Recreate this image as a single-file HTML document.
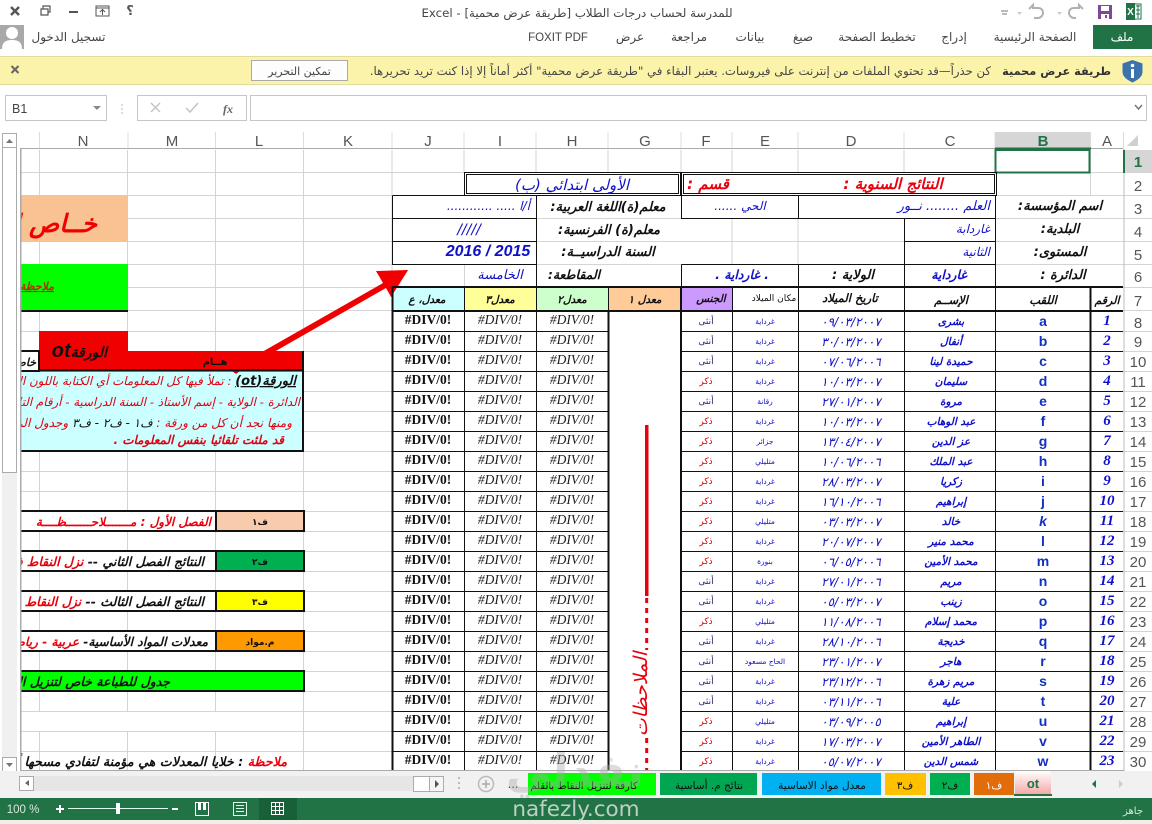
<!DOCTYPE html>
<html lang="ar"><head><meta charset="utf-8"><title>Excel</title>
<style>
html,body{margin:0;padding:0;background:#fff;width:1152px;height:824px;overflow:hidden}
svg{display:block}
text{font-family:"DejaVu Sans",sans-serif;text-anchor:middle;direction:rtl}
.la{font-family:"Liberation Sans",sans-serif;direction:ltr}
.r{direction:rtl;text-anchor:start}
.ui{font-size:12px;fill:#444}
.hd{font-family:"Liberation Sans",sans-serif;font-size:15px;fill:#555;direction:ltr}
.bi{font-weight:bold;font-style:italic}
.t{font-size:12.5px;font-weight:bold;font-style:italic;fill:#111}
.b{font-size:12px;font-style:italic;fill:#1010c8}
.bb{font-size:12.5px;font-style:italic;font-weight:bold;fill:#1010c8}
.rd{fill:#e8000c}
.h{font-size:10.5px;font-weight:bold;font-style:italic;fill:#111}
.n{font-family:"Liberation Serif",serif;font-weight:bold;font-style:italic;font-size:15px;fill:#1010c8}
.l{font-family:"Liberation Sans",sans-serif;font-weight:bold;font-size:14px;fill:#1030c0;direction:ltr}
.m{font-size:10.500px;font-weight:bold;font-style:italic;fill:#1010c8}
.d{font-size:12px;font-style:italic;fill:#1010c8}
.p{font-size:7.5px;fill:#1010c8}
.f{font-size:9px;fill:#222266}
.mm{font-size:9px;fill:#e00000}
.e{font-family:"Liberation Serif",serif;font-weight:bold;font-size:13.5px;fill:#111;direction:ltr}
.ei{font-family:"Liberation Serif",serif;font-style:italic;font-size:13.5px;fill:#222;direction:ltr}
.tab{font-size:10.5px;fill:#111}
</style></head><body>
<svg xmlns="http://www.w3.org/2000/svg" width="1152" height="824" viewBox="0 0 1152 824">
<rect width="1152" height="824" fill="#fff"/>

<!-- title bar -->
<g fill="none" stroke="#555">
<path d="M11 7l8 8M19 7l-8 8" stroke-width="2.4"/>
<path d="M41 9h7v6h-7zM43 9V6h7v6h-2" stroke-width="1.2"/>
<path d="M69 12h9" stroke-width="2"/>
<path d="M96 6h13v10H96zM96 8h13M102.500 15v-5M100 12l2.500-2.500 2.500 2.500" stroke-width="1"/>
</g>
<text x="130" y="15" font-size="13" font-weight="bold" fill="#555">؟</text>
<text x="577" y="17" class="ui" style="font-size:11.800px">للمدرسة لحساب درجات الطلاب  [طريقة عرض محمية] - Excel</text>
<path d="M1001 11h7M1002 14h5" stroke="#777" stroke-width="1" fill="none"/>
<path d="M1017 12h5l-2.500 3zM1057 12h5l-2.500 3z" fill="#ccc"/>
<path d="M1029 9l4-4v3h5c4 0 5 3 5 5s-2 5-5 5h-4" fill="none" stroke="#b0b0b0" stroke-width="2"/>
<path d="M1083 9l-4-4v3h-5c-4 0-5 3-5 5s2 5 5 5h2" fill="none" stroke="#b0b0b0" stroke-width="2"/>
<path d="M1098 5h14v14h-14z" fill="#804998"/><rect x="1101" y="6" width="8" height="5" fill="#fff"/><rect x="1101" y="14" width="8" height="5" fill="#fff"/><rect x="1105" y="15" width="2" height="3" fill="#804998"/>
<rect x="1130" y="4" width="11" height="15" fill="#fff" stroke="#217346"/><path d="M1136 6h4M1136 10h4M1136 14h4M1138 5v13" stroke="#217346"/><rect x="1126" y="3" width="9" height="17" fill="#217346"/>
<text x="1130.500" y="15" class="la" font-size="10" font-weight="bold" fill="#fff">X</text>

<!-- ribbon tabs -->
<rect x="0" y="25" width="24" height="24" fill="#a9a9a9"/>
<circle cx="12" cy="33" r="6" fill="#fff"/><path d="M2 49c0-7 4-9 10-9s10 2 10 9z" fill="#fff"/>
<text x="68.500" y="41" class="ui">تسجيل الدخول</text>
<rect x="1093" y="25" width="59" height="24" fill="#217346"/>
<text x="1122" y="41" class="ui" style="fill:#fff">ملف</text>
<text x="1035" y="41" class="ui">الصفحة الرئيسية</text>
<text x="954" y="41" class="ui">إدراج</text>
<text x="877" y="41" class="ui">تخطيط الصفحة</text>
<text x="803" y="41" class="ui">صيغ</text>
<text x="750" y="41" class="ui">بيانات</text>
<text x="689" y="41" class="ui">مراجعة</text>
<text x="630" y="41" class="ui">عرض</text>
<text x="558" y="41" class="la" font-size="11.500" fill="#444">FOXIT PDF</text>

<!-- protected view bar -->
<rect x="0" y="56" width="1152" height="29" fill="#fbf3a9"/>
<path d="M0 56.500H1152M0 84.500H1152" stroke="#e2dc9c" fill="none"/>
<path d="M11.500 66l7 7M18.500 66l-7 7" stroke="#666" stroke-width="2" fill="none"/>
<rect x="251.500" y="60.500" width="96" height="20" fill="#fdfdfd" stroke="#aaa"/>
<text x="299.500" y="75" class="ui" style="font-size:11px">تمكين التحرير</text>
<path d="M1132.500 60l10 3.500v8c0 6-6 9-10 11-4-2-10-5-10-11v-8z" fill="#3d73ad"/>
<rect x="1131" y="69" width="3" height="9" fill="#fff"/><circle cx="1132.500" cy="65.500" r="1.800" fill="#fff"/>
<text x="1111" y="75" class="r" font-size="11.300" font-weight="bold" fill="#333">طريقة عرض محمية</text>
<text x="991" y="75" class="r" font-size="11.700" fill="#444">كن حذراً—قد تحتوي الملفات من إنترنت على فيروسات. يعتبر البقاء في "طريقة عرض محمية" أكثر أماناً إلا إذا كنت تريد تحريرها.</text>

<!-- formula bar -->
<rect x="5.500" y="95.500" width="101" height="25" fill="#fff" stroke="#c6c6c6"/>
<text x="12" y="113" class="la" font-size="12.500" fill="#444" style="text-anchor:start">B1</text>
<path d="M93 106h8l-4 4z" fill="#888"/>
<path d="M122 104v2M122 108v2M122 112v2" stroke="#bbb"/>
<rect x="137.500" y="95.500" width="109" height="25" fill="#fff" stroke="#c6c6c6"/>
<path d="M151 103l9 9M160 103l-9 9" stroke="#c4c4c4" stroke-width="1.500" fill="none"/>
<path d="M186 108l4 4 8-9" stroke="#c4c4c4" stroke-width="1.500" fill="none"/>
<text x="228" y="113" font-style="italic" font-weight="bold" font-size="12" fill="#666" style="font-family:'Liberation Serif',serif;direction:ltr">fx</text>
<rect x="250.500" y="95.500" width="896" height="25" fill="#fff" stroke="#c6c6c6"/>
<path d="M1135 105l3.500 4 3.500-4" stroke="#777" stroke-width="1.500" fill="none"/>

<!-- column headers -->
<rect x="995" y="132" width="95" height="17" fill="#d6d6d6"/>
<path d="M39.500 132V149M128 132V149M215.500 132V149M303.500 132V149M392 132V149M464 132V149M536 132V149M608 132V149M681 132V149M732 132V149M798 132V149M904 132V149M995 132V149M1090.500 132V149M1123.500 132V149" stroke="#dcdcdc" fill="none"/>
<path d="M20 148.500H1123" stroke="#aaa" fill="none"/>
<rect x="995" y="147.500" width="96" height="2" fill="#217346"/>
<path d="M1138 146h-11l11-11z" fill="#d0d0d0"/>
<text x="83" y="146" class="hd">N</text><text x="172" y="146" class="hd">M</text><text x="259" y="146" class="hd">L</text><text x="348" y="146" class="hd">K</text><text x="428" y="146" class="hd">J</text><text x="500" y="146" class="hd">I</text><text x="572" y="146" class="hd">H</text><text x="645" y="146" class="hd">G</text><text x="706" y="146" class="hd">F</text><text x="765" y="146" class="hd">E</text><text x="851" y="146" class="hd">D</text><text x="950" y="146" class="hd">C</text>
<text x="1043" y="146" class="hd" style="fill:#217346;font-weight:bold">B</text><text x="1107" y="146" class="hd">A</text>

<!-- grid -->
<g fill="none" stroke="#d4d4d4">
<path d="M20 172.500H1152M20 195.500H1152M20 218.500H1152M20 241.500H1152M20 264.500H1152M20 287.500H1152M20 310.500H1152M20 331.500H1152M20 351.500H1152M20 371.500H1152M20 391.500H1152M20 411.500H1152M20 431.500H1152M20 451.500H1152M20 471.500H1152M20 491.500H1152M20 511.500H1152M20 531.500H1152M20 551.500H1152M20 571.500H1152M20 591.500H1152M20 611.500H1152M20 631.500H1152M20 651.500H1152M20 671.500H1152M20 691.500H1152M20 711.500H1152M20 731.500H1152M20 751.500H1152"/>
<path d="M39.500 150V771M127.500 150V771M215.500 150V771M303.500 150V771M392 150V771M464 150V173M536 150V173M608 150V173M681 150V173M732 150V173M798 150V173M904 150V173M995 150V173M1090.500 150V196M732 218V265M798 218V265M464.500 264V287"/>
</g>
<rect x="21" y="712" width="282" height="19" fill="#fff"/>
<path d="M1124 149V771" stroke="#bbb" fill="none"/>

<!-- row numbers -->
<rect x="1124" y="150" width="28" height="22" fill="#d6d6d6"/><rect x="1123" y="150" width="2" height="23" fill="#217346"/>
<text x="1138" y="167" class="hd" style="fill:#217346;font-weight:bold">1</text>
<text x="1138" y="191" class="hd">2</text><text x="1138" y="214" class="hd">3</text><text x="1138" y="237" class="hd">4</text><text x="1138" y="260" class="hd">5</text><text x="1138" y="282" class="hd">6</text><text x="1138" y="306" class="hd">7</text><text x="1138" y="328" class="hd">8</text><text x="1138" y="347" class="hd">9</text><text x="1138" y="367" class="hd">10</text><text x="1138" y="387" class="hd">11</text><text x="1138" y="407" class="hd">12</text><text x="1138" y="427" class="hd">13</text><text x="1138" y="447" class="hd">14</text><text x="1138" y="467" class="hd">15</text><text x="1138" y="487" class="hd">16</text><text x="1138" y="507" class="hd">17</text><text x="1138" y="527" class="hd">18</text><text x="1138" y="547" class="hd">19</text><text x="1138" y="567" class="hd">20</text><text x="1138" y="587" class="hd">21</text><text x="1138" y="607" class="hd">22</text><text x="1138" y="627" class="hd">23</text><text x="1138" y="647" class="hd">24</text><text x="1138" y="667" class="hd">25</text><text x="1138" y="687" class="hd">26</text><text x="1138" y="707" class="hd">27</text><text x="1138" y="727" class="hd">28</text><text x="1138" y="747" class="hd">29</text><text x="1138" y="767" class="hd">30</text>

<!-- selection -->
<rect x="995.500" y="150" width="94" height="22.500" fill="none" stroke="#217346" stroke-width="2"/>

<!-- left panels -->
<rect x="20" y="195" width="108" height="47" fill="#f8c292"/>
<text x="97" y="232" class="r" font-size="25" font-weight="bold" font-style="italic" fill="#f00000">خــاص التلميذ</text>
<rect x="20" y="264" width="108" height="46" fill="#00ff00"/>
<rect x="20" y="310" width="108" height="2" fill="#111"/>
<text x="54" y="290" class="r" font-size="11" font-weight="bold" font-style="italic" fill="#b82a00" style="text-decoration:underline">ملاحظة هامة</text>

<rect x="21" y="372" width="282" height="79" fill="#ccffff"/>
<polygon points="262,352 383,283 376,271 408,270 391,297 386,288 274,352" fill="#f00000"/>
<polygon points="232,371 240,371 236,374" fill="#f00000"/>
<rect x="39" y="331" width="89" height="21" fill="#f00000"/>
<rect x="39" y="351" width="265" height="20" fill="#f00000"/>
<rect x="19" y="351" width="20" height="20" fill="#fff" stroke="#111" stroke-width="2"/>
<text x="36" y="366" class="r" font-size="11" font-weight="bold" font-style="italic" fill="#111">خاص</text>
<path d="M39 370.500H304M303 351V452M10 451H304" stroke="#111" stroke-width="2" fill="none"/>
<text x="107" y="357" class="r" font-size="14" font-style="italic" font-weight="bold" fill="#111"><tspan>الورقة</tspan><tspan font-size="20" style="font-family:'Liberation Sans',sans-serif">ot</tspan></text>
<text x="215" y="365" font-size="10" font-weight="bold" fill="#111">هــام</text>
<text x="296" y="385" class="r" font-size="11.800" font-style="italic" fill="#e00010"><tspan fill="#111" font-weight="bold" font-size="13" text-decoration="underline">الورقة(ot)</tspan> : تملأ فيها كل المعلومات أي الكتابة باللون الأزرق</text>
<text x="300" y="406" class="r" font-size="11.800" font-style="italic" fill="#e00010">الدائرة - الولاية - إسم الأستاذ - السنة الدراسية - أرقام التلاميذ</text>
<text x="292" y="427" class="r" font-size="12" font-style="italic" fill="#e00010">ومنها نجد أن كل من ورقة : <tspan fill="#111">ف١ - ف٢ - ف٣</tspan> وجدول المعدلات</text>
<text x="284" y="444" class="r" font-size="12" font-style="italic" font-weight="bold" fill="#e00010">قد ملئت تلقائيا بنفس المعلومات .</text>

<g stroke="#111" stroke-width="2">
<rect x="10" y="511" width="206" height="20" fill="#fff"/><rect x="216" y="511" width="88" height="20" fill="#f8cbad"/>
<rect x="10" y="551" width="206" height="20" fill="#fff"/><rect x="216" y="551" width="88" height="20" fill="#00b050"/>
<rect x="10" y="591" width="206" height="20" fill="#fff"/><rect x="216" y="591" width="88" height="20" fill="#ffff00"/>
<rect x="10" y="631" width="206" height="20" fill="#fff"/><rect x="216" y="631" width="88" height="20" fill="#ff9900"/>
<rect x="10" y="671" width="294" height="20" fill="#00ff00"/>
</g>
<text x="260" y="525" font-size="9" font-weight="bold" fill="#111">ف١</text>
<text x="260" y="565" font-size="9" font-weight="bold" fill="#111">ف٢</text>
<text x="260" y="605" font-size="9" font-weight="bold" fill="#111">ف٣</text>
<text x="260" y="645" font-size="9" font-weight="bold" fill="#111">م.مواد</text>
<text x="211" y="526" class="r" font-size="12" font-weight="bold" font-style="italic" fill="#e8000c">الفصل الأول : مـــــــلاحـــــــظــــة</text>
<text x="204" y="566" class="r" font-size="12.500" font-weight="bold" font-style="italic" fill="#111">النتائج الفصل الثاني -- <tspan fill="#e8000c">نزل النقاط فقط</tspan></text>
<text x="204" y="606" class="r" font-size="12.500" font-weight="bold" font-style="italic" fill="#111">النتائج الفصل الثالث -- <tspan fill="#e8000c">نزل النقاط فقط</tspan></text>
<text x="208" y="646" class="r" font-size="12.200" font-weight="bold" font-style="italic" fill="#111">معدلات المواد الأساسية- <tspan fill="#e8000c">عربية - رياضيات</tspan></text>
<text x="170" y="686" class="r" font-size="12.500" font-weight="bold" font-style="italic" fill="#111">جدول للطباعة خاص لتنزيل النقاط</text>
<text x="287" y="766" class="r" font-size="12.700" font-weight="bold" font-style="italic" fill="#111"><tspan fill="#e8000c">ملاحظة</tspan> : خلايا المعدلات هي مؤمنة لتفادي مسحها أو تغييرها</text>

<!-- main table upper -->
<rect x="393" y="288" width="71" height="23" fill="#ccffff"/>
<rect x="464" y="288" width="72" height="23" fill="#ffff99"/>
<rect x="536" y="288" width="72" height="23" fill="#ccffcc"/>
<rect x="608" y="288" width="73" height="23" fill="#ffcc99"/>
<rect x="681" y="288" width="51" height="23" fill="#cc99ff"/>
<rect x="609" y="312" width="71" height="459" fill="#fff"/>
<polygon points="393,275 408,270 391,297" fill="#f00000"/>

<g fill="none" stroke="#111">
<rect x="464.500" y="172.500" width="216" height="23"/><rect x="466.500" y="174.500" width="212" height="19"/>
<rect x="681.500" y="172.500" width="315" height="23"/><rect x="683.500" y="174.500" width="311" height="19"/>
<path d="M392.500 195.500H536.500V287M392.500 195.500V265M392.500 218.500H536.500M392.500 241.500H536.500M392.500 264.500H536.500"/>
<path d="M681.500 195.500H995.500V287M681.500 195.500V218.500H995.500M798.500 195.500V218.500M904.500 218.500V287M904.500 241.500H995.500M681.500 264.500H995.500M681.500 264.500V287M798.500 264.500V287"/>
</g>
<g fill="none" stroke="#111">
<path d="M393 331.500H608M393 351.500H608M393 371.500H608M393 391.500H608M393 411.500H608M393 431.500H608M393 451.500H608M393 471.500H608M393 491.500H608M393 511.500H608M393 531.500H608M393 551.500H608M393 571.500H608M393 591.500H608M393 611.500H608M393 631.500H608M393 651.500H608M393 671.500H608M393 691.500H608M393 711.500H608M393 731.500H608M393 751.500H608"/>
<path d="M682 331.500H1123M682 351.500H1123M682 371.500H1123M682 391.500H1123M682 411.500H1123M682 431.500H1123M682 451.500H1123M682 471.500H1123M682 491.500H1123M682 511.500H1123M682 531.500H1123M682 551.500H1123M682 571.500H1123M682 591.500H1123M682 611.500H1123M682 631.500H1123M682 651.500H1123M682 671.500H1123M682 691.500H1123M682 711.500H1123M682 731.500H1123M682 751.500H1123"/>
<path d="M464.500 288V771M536.500 288V771M732.500 288V771M798.500 288V771M904.500 288V771M995.500 288V771"/>
<path d="M608.500 288V311M681 288V311"/>
<path d="M392 287H1123M392 311H1123" stroke-width="2"/>
<path d="M392.500 287V771M608.500 311V771M681 287V771M1090.500 287V771" stroke-width="2"/>
</g>

<rect x="645" y="425" width="3.500" height="171" fill="#e8000c"/>
<path d="M646.700 598V771" stroke="#e8000c" stroke-width="3" stroke-dasharray="5 5" fill="none"/>
<rect x="630" y="650" width="30" height="88" fill="#fff"/>
<text transform="translate(647,694) rotate(-90)" font-size="19" font-style="italic" fill="#e8000c">الملاحظات</text>

<!-- header labels -->
<text x="572" y="190" class="bb" style="font-size:15px;font-weight:normal">الأولى ابتدائي  (ب)</text>
<text x="708" y="189" class="bi rd" font-size="15">قسم :</text>
<text x="893" y="189" class="bi rd" font-size="15">النتائج  السنوية :</text>
<text x="1060" y="210" class="t" style="font-size:13px">اسم المؤسسة:</text>
<text x="1060" y="233" class="t" style="font-size:13px">البلدية:</text>
<text x="1060" y="256" class="t" style="font-size:13px">المستوى:</text>
<text x="1063" y="279" class="t" style="font-size:13px">الدائرة :</text>
<text x="990" y="210" class="r b" style="font-size:13px">العلم ........ نــور</text>
<text x="740" y="210" class="b">الحي ......</text>
<text x="990" y="233" class="r b">غاردابة</text>
<text x="990" y="256" class="r b">الثانية</text>
<text x="949" y="279" class="bb">غارداية</text>
<text x="853" y="279" class="t" style="font-size:13px">الولاية :</text>
<text x="742" y="279" class="bb">. غارداية .</text>
<text x="530" y="210" class="r b">أ/ا ..... ............</text>
<text x="608" y="211" class="t" style="font-size:13px">معلم(ة)اللغة العربية:</text>
<text x="609" y="234" class="t" style="font-size:13px">معلم(ة)  الفرنسية:</text>
<text x="608" y="256" class="t" style="font-size:13px">السنة الدراسيــة:</text>
<text x="469" y="234" class="b" style="font-size:14px">/////</text>
<text x="488" y="256" style="font-family:'Liberation Sans',sans-serif;font-size:16px;font-style:italic;font-weight:bold;fill:#1010c8;direction:ltr">2016 / 2015</text>
<text x="574" y="279" class="t">المقاطعة:</text>
<text x="500" y="279" class="b" style="font-size:13px">الخامسة</text>

<text x="1107" y="304" class="h" style="font-size:11px">الرقم</text>
<text x="1043" y="304" class="h" style="font-size:11.500px">اللقب</text>
<text x="951" y="304" class="h" style="font-size:11.500px">الإســم</text>
<text x="850" y="302" class="h" style="font-size:11.500px">تاريخ الميلاد</text>
<text x="774" y="301" style="font-size:9px;fill:#111">مكان الميلاد</text>
<text x="711" y="302" class="h">الجنس</text>
<text x="645" y="303" class="h">معدل ١</text>
<text x="572" y="303" class="h">معدل٢</text>
<text x="500" y="303" class="h">معدل٣</text>
<text x="427" y="303" class="h">معدل، ع</text>

<!-- data rows -->
<g transform="translate(0,321)"><text x="1107" y="4" class="n">1</text><text x="1043" y="5" class="l">a</text><text x="951" y="4" class="m">بشرى</text><text x="851" y="5" class="d">٠٩/٠٣/٢٠٠٧</text><text x="765" y="3" class="p">غرداية</text><text x="706" y="3" class="f">أنثى</text><text x="428" y="3" class="e">#DIV/0!</text><text x="500" y="3" class="ei">#DIV/0!</text><text x="572" y="3" class="ei">#DIV/0!</text></g>
<g transform="translate(0,341)"><text x="1107" y="4" class="n">2</text><text x="1043" y="5" class="l">b</text><text x="951" y="4" class="m">أنفال</text><text x="851" y="5" class="d">٣٠/٠٣/٢٠٠٧</text><text x="765" y="3" class="p">غرداية</text><text x="706" y="3" class="f">أنثى</text><text x="428" y="3" class="e">#DIV/0!</text><text x="500" y="3" class="ei">#DIV/0!</text><text x="572" y="3" class="ei">#DIV/0!</text></g>
<g transform="translate(0,361)"><text x="1107" y="4" class="n">3</text><text x="1043" y="5" class="l">c</text><text x="951" y="4" class="m">حميدة لينا</text><text x="851" y="5" class="d">٠٧/٠٦/٢٠٠٦</text><text x="765" y="3" class="p">غرداية</text><text x="706" y="3" class="f">أنثى</text><text x="428" y="3" class="e">#DIV/0!</text><text x="500" y="3" class="ei">#DIV/0!</text><text x="572" y="3" class="ei">#DIV/0!</text></g>
<g transform="translate(0,381)"><text x="1107" y="4" class="n">4</text><text x="1043" y="5" class="l">d</text><text x="951" y="4" class="m">سليمان</text><text x="851" y="5" class="d">١٠/٠٣/٢٠٠٧</text><text x="765" y="3" class="p">غرداية</text><text x="706" y="3" class="mm">ذكر</text><text x="428" y="3" class="e">#DIV/0!</text><text x="500" y="3" class="ei">#DIV/0!</text><text x="572" y="3" class="ei">#DIV/0!</text></g>
<g transform="translate(0,401)"><text x="1107" y="4" class="n">5</text><text x="1043" y="5" class="l">e</text><text x="951" y="4" class="m">مروة</text><text x="851" y="5" class="d">٢٧/٠١/٢٠٠٧</text><text x="765" y="3" class="p">رقانة</text><text x="706" y="3" class="f">أنثى</text><text x="428" y="3" class="e">#DIV/0!</text><text x="500" y="3" class="ei">#DIV/0!</text><text x="572" y="3" class="ei">#DIV/0!</text></g>
<g transform="translate(0,421)"><text x="1107" y="4" class="n">6</text><text x="1043" y="5" class="l">f</text><text x="951" y="4" class="m">عبد الوهاب</text><text x="851" y="5" class="d">١٠/٠٣/٢٠٠٧</text><text x="765" y="3" class="p">غرداية</text><text x="706" y="3" class="mm">ذكر</text><text x="428" y="3" class="e">#DIV/0!</text><text x="500" y="3" class="ei">#DIV/0!</text><text x="572" y="3" class="ei">#DIV/0!</text></g>
<g transform="translate(0,441)"><text x="1107" y="4" class="n">7</text><text x="1043" y="5" class="l">g</text><text x="951" y="4" class="m">عز الدين</text><text x="851" y="5" class="d">١٣/٠٤/٢٠٠٧</text><text x="765" y="3" class="p">جزائر</text><text x="706" y="3" class="mm">ذكر</text><text x="428" y="3" class="e">#DIV/0!</text><text x="500" y="3" class="ei">#DIV/0!</text><text x="572" y="3" class="ei">#DIV/0!</text></g>
<g transform="translate(0,461)"><text x="1107" y="4" class="n">8</text><text x="1043" y="5" class="l">h</text><text x="951" y="4" class="m">عبد الملك</text><text x="851" y="5" class="d">١٠/٠٦/٢٠٠٦</text><text x="765" y="3" class="p">متليلي</text><text x="706" y="3" class="mm">ذكر</text><text x="428" y="3" class="e">#DIV/0!</text><text x="500" y="3" class="ei">#DIV/0!</text><text x="572" y="3" class="ei">#DIV/0!</text></g>
<g transform="translate(0,481)"><text x="1107" y="4" class="n">9</text><text x="1043" y="5" class="l">i</text><text x="951" y="4" class="m">زكريا</text><text x="851" y="5" class="d">٢٨/٠٣/٢٠٠٧</text><text x="765" y="3" class="p">غرداية</text><text x="706" y="3" class="mm">ذكر</text><text x="428" y="3" class="e">#DIV/0!</text><text x="500" y="3" class="ei">#DIV/0!</text><text x="572" y="3" class="ei">#DIV/0!</text></g>
<g transform="translate(0,501)"><text x="1107" y="4" class="n">10</text><text x="1043" y="5" class="l">j</text><text x="951" y="4" class="m">إبراهيم</text><text x="851" y="5" class="d">١٦/١٠/٢٠٠٦</text><text x="765" y="3" class="p">غرداية</text><text x="706" y="3" class="mm">ذكر</text><text x="428" y="3" class="e">#DIV/0!</text><text x="500" y="3" class="ei">#DIV/0!</text><text x="572" y="3" class="ei">#DIV/0!</text></g>
<g transform="translate(0,521)"><text x="1107" y="4" class="n">11</text><text x="1043" y="5" class="l" font-style="italic">k</text><text x="951" y="4" class="m">خالد</text><text x="851" y="5" class="d">٠٣/٠٣/٢٠٠٧</text><text x="765" y="3" class="p">متليلي</text><text x="706" y="3" class="mm">ذكر</text><text x="428" y="3" class="e">#DIV/0!</text><text x="500" y="3" class="ei">#DIV/0!</text><text x="572" y="3" class="ei">#DIV/0!</text></g>
<g transform="translate(0,541)"><text x="1107" y="4" class="n">12</text><text x="1043" y="5" class="l">l</text><text x="951" y="4" class="m">محمد منير</text><text x="851" y="5" class="d">٢٠/٠٧/٢٠٠٧</text><text x="765" y="3" class="p">غرداية</text><text x="706" y="3" class="mm">ذكر</text><text x="428" y="3" class="e">#DIV/0!</text><text x="500" y="3" class="ei">#DIV/0!</text><text x="572" y="3" class="ei">#DIV/0!</text></g>
<g transform="translate(0,561)"><text x="1107" y="4" class="n">13</text><text x="1043" y="5" class="l">m</text><text x="951" y="4" class="m">محمد الأمين</text><text x="851" y="5" class="d">٠٦/٠٥/٢٠٠٦</text><text x="765" y="3" class="p">بنورة</text><text x="706" y="3" class="mm">ذكر</text><text x="428" y="3" class="e">#DIV/0!</text><text x="500" y="3" class="ei">#DIV/0!</text><text x="572" y="3" class="ei">#DIV/0!</text></g>
<g transform="translate(0,581)"><text x="1107" y="4" class="n">14</text><text x="1043" y="5" class="l">n</text><text x="951" y="4" class="m">مريم</text><text x="851" y="5" class="d">٢٧/٠١/٢٠٠٦</text><text x="765" y="3" class="p">غرداية</text><text x="706" y="3" class="f">أنثى</text><text x="428" y="3" class="e">#DIV/0!</text><text x="500" y="3" class="ei">#DIV/0!</text><text x="572" y="3" class="ei">#DIV/0!</text></g>
<g transform="translate(0,601)"><text x="1107" y="4" class="n">15</text><text x="1043" y="5" class="l">o</text><text x="951" y="4" class="m">زينب</text><text x="851" y="5" class="d">٠٥/٠٣/٢٠٠٧</text><text x="765" y="3" class="p">غرداية</text><text x="706" y="3" class="f">أنثى</text><text x="428" y="3" class="e">#DIV/0!</text><text x="500" y="3" class="ei">#DIV/0!</text><text x="572" y="3" class="ei">#DIV/0!</text></g>
<g transform="translate(0,621)"><text x="1107" y="4" class="n">16</text><text x="1043" y="5" class="l">p</text><text x="951" y="4" class="m">محمد إسلام</text><text x="851" y="5" class="d">١١/٠٨/٢٠٠٦</text><text x="765" y="3" class="p">متليلي</text><text x="706" y="3" class="mm">ذكر</text><text x="428" y="3" class="e">#DIV/0!</text><text x="500" y="3" class="ei">#DIV/0!</text><text x="572" y="3" class="ei">#DIV/0!</text></g>
<g transform="translate(0,641)"><text x="1107" y="4" class="n">17</text><text x="1043" y="5" class="l">q</text><text x="951" y="4" class="m">خديجة</text><text x="851" y="5" class="d">٢٨/١٠/٢٠٠٦</text><text x="765" y="3" class="p">غرداية</text><text x="706" y="3" class="f">أنثى</text><text x="428" y="3" class="e">#DIV/0!</text><text x="500" y="3" class="ei">#DIV/0!</text><text x="572" y="3" class="ei">#DIV/0!</text></g>
<g transform="translate(0,661)"><text x="1107" y="4" class="n">18</text><text x="1043" y="5" class="l">r</text><text x="951" y="4" class="m">هاجر</text><text x="851" y="5" class="d">٢٣/٠١/٢٠٠٧</text><text x="765" y="3" class="p">الحاج مسعود</text><text x="706" y="3" class="f">أنثى</text><text x="428" y="3" class="e">#DIV/0!</text><text x="500" y="3" class="ei">#DIV/0!</text><text x="572" y="3" class="ei">#DIV/0!</text></g>
<g transform="translate(0,681)"><text x="1107" y="4" class="n">19</text><text x="1043" y="5" class="l">s</text><text x="951" y="4" class="m">مريم زهرة</text><text x="851" y="5" class="d">٢٣/١٢/٢٠٠٦</text><text x="765" y="3" class="p">غرداية</text><text x="706" y="3" class="f">أنثى</text><text x="428" y="3" class="e">#DIV/0!</text><text x="500" y="3" class="ei">#DIV/0!</text><text x="572" y="3" class="ei">#DIV/0!</text></g>
<g transform="translate(0,701)"><text x="1107" y="4" class="n">20</text><text x="1043" y="5" class="l">t</text><text x="951" y="4" class="m">علية</text><text x="851" y="5" class="d">٠٣/١١/٢٠٠٦</text><text x="765" y="3" class="p">غرداية</text><text x="706" y="3" class="f">أنثى</text><text x="428" y="3" class="e">#DIV/0!</text><text x="500" y="3" class="ei">#DIV/0!</text><text x="572" y="3" class="ei">#DIV/0!</text></g>
<g transform="translate(0,721)"><text x="1107" y="4" class="n">21</text><text x="1043" y="5" class="l">u</text><text x="951" y="4" class="m">إبراهيم</text><text x="851" y="5" class="d">٠٣/٠٩/٢٠٠٥</text><text x="765" y="3" class="p">متليلي</text><text x="706" y="3" class="mm">ذكر</text><text x="428" y="3" class="e">#DIV/0!</text><text x="500" y="3" class="ei">#DIV/0!</text><text x="572" y="3" class="ei">#DIV/0!</text></g>
<g transform="translate(0,741)"><text x="1107" y="4" class="n">22</text><text x="1043" y="5" class="l">v</text><text x="951" y="4" class="m">الطاهر الأمين</text><text x="851" y="5" class="d">١٧/٠٣/٢٠٠٧</text><text x="765" y="3" class="p">غرداية</text><text x="706" y="3" class="mm">ذكر</text><text x="428" y="3" class="e">#DIV/0!</text><text x="500" y="3" class="ei">#DIV/0!</text><text x="572" y="3" class="ei">#DIV/0!</text></g>
<g transform="translate(0,761)"><text x="1107" y="4" class="n">23</text><text x="1043" y="5" class="l">w</text><text x="951" y="4" class="m">شمس الدين</text><text x="851" y="5" class="d">٠٥/٠٧/٢٠٠٧</text><text x="765" y="3" class="p">غرداية</text><text x="706" y="3" class="mm">ذكر</text><text x="428" y="3" class="e">#DIV/0!</text><text x="500" y="3" class="ei">#DIV/0!</text><text x="572" y="3" class="ei">#DIV/0!</text></g>

<!-- left strip / vertical scrollbar -->
<rect x="0" y="132" width="20" height="640" fill="#fff"/>
<rect x="20" y="149" width="1.500" height="622" fill="#ababab"/>
<rect x="2" y="473" width="15" height="299" fill="#f0f0f0"/>
<rect x="2.500" y="133.500" width="14" height="14" fill="#fff" stroke="#ababab"/>
<path d="M6 143h7l-3.500-4z" fill="#777"/>
<rect x="2.500" y="147.500" width="14" height="325" fill="#fff" stroke="#ababab"/>
<rect x="2.500" y="757.500" width="14" height="14" fill="#fff" stroke="#ababab"/>
<path d="M6 763h7l-3.500 4z" fill="#777"/>

<!-- tab bar -->
<rect x="0" y="771" width="1152" height="27" fill="#f1f1f1"/>
<path d="M20 770.500H1124" stroke="#aaa" fill="none"/>
<rect x="19.500" y="776.500" width="14" height="14" fill="#fff" stroke="#ababab"/>
<path d="M29 780v6l-4-3z" fill="#666"/>
<rect x="34" y="776" width="379" height="15" fill="#e6e6e6"/>
<rect x="413.500" y="776.500" width="16" height="15" fill="#fff" stroke="#ababab"/>
<rect x="429.500" y="776.500" width="14" height="15" fill="#f6f6f6" stroke="#ababab"/>
<path d="M435 780v8l4-4z" fill="#555"/>
<path d="M459 777v2M459 782v2M459 787v2" stroke="#aaa" stroke-width="1.500"/>
<circle cx="486" cy="784" r="7.500" fill="none" stroke="#bbb" stroke-width="1.500"/>
<path d="M486 780v8M482 784h8" stroke="#aaa" stroke-width="1.500"/>
<text x="513" y="788" class="la" font-size="13" fill="#333">...</text>
<rect x="528" y="773" width="128" height="22" fill="#00ff00"/>
<text x="584" y="789" font-size="10" fill="#111">كارفة لتنزيل النقاط بالقلم</text>
<rect x="660" y="773" width="97" height="22" fill="#00a651"/>
<text x="709" y="789" class="tab">نتائج م. أساسية</text>
<rect x="762" y="773" width="119" height="22" fill="#00b0f0"/>
<text x="822" y="789" class="tab">معدل مواد الاساسية</text>
<rect x="885" y="773" width="41" height="22" fill="#ffc000"/>
<text x="905" y="789" class="tab">ف٣</text>
<rect x="930" y="773" width="40" height="22" fill="#00b050"/>
<text x="950" y="789" class="tab">ف٢</text>
<rect x="974" y="773" width="40" height="22" fill="#e36c0a"/>
<text x="994" y="789" class="tab" style="fill:#fff">ف١</text>
<defs><linearGradient id="g1" x1="0" y1="0" x2="0" y2="1"><stop offset="0" stop-color="#fff"/><stop offset="1" stop-color="#f5a8a8"/></linearGradient></defs>
<rect x="1015" y="771" width="36" height="23" fill="url(#g1)"/>
<rect x="1014" y="794" width="38" height="2" fill="#217346"/>
<text x="1033" y="788" class="la" font-size="13" font-weight="bold" fill="#217346">ot</text>
<path d="M1096 780v8l-4-4z" fill="#217346"/>
<path d="M1119 780v8l4-4z" fill="#ccc"/>

<!-- status bar -->
<rect x="0" y="798" width="1152" height="22" fill="#217346"/>
<rect x="0" y="820" width="1152" height="4" fill="#eeeeea"/>
<text x="23" y="813" class="la" font-size="11.500" fill="#d8e8de">100 %</text>
<path d="M56 809h8M60 805v8" stroke="#fff" stroke-width="2"/>
<path d="M68 808.500H168" stroke="#dfe" fill="none"/>
<rect x="116" y="803" width="4" height="11" fill="#fff"/>
<path d="M172 809h6" stroke="#fff" stroke-width="2"/>
<rect x="195.500" y="802.500" width="13" height="13" fill="none" stroke="#fff"/><rect x="198" y="803" width="3" height="7" fill="#fff"/><rect x="203" y="803" width="3" height="7" fill="#fff"/>
<rect x="233.500" y="802.500" width="13" height="13" fill="none" stroke="#dfe"/><path d="M236 805.500h8M236 808.500h8M236 811.500h8" stroke="#dfe" fill="none"/>
<rect x="259" y="798" width="38" height="22" fill="#176038"/>
<rect x="271.500" y="802.500" width="12" height="12" fill="none" stroke="#fff"/><path d="M275.500 802v13M279.500 802v13M271 806.500h13M271 810.500h13" stroke="#fff" fill="none"/>
<text x="1133" y="814" font-size="10" fill="#d8e8de">جاهز</text>

<!-- watermark -->
<text x="575" y="787" font-size="46" font-weight="bold" fill="#a8a8a8" fill-opacity=".4" textLength="138" lengthAdjust="spacingAndGlyphs">نفذلي</text>
<text x="576" y="816" font-size="21.500" style="font-family:'DejaVu Sans',sans-serif;direction:ltr" fill="#bcd0c4">nafezly.com</text>
</svg>
</body></html>
